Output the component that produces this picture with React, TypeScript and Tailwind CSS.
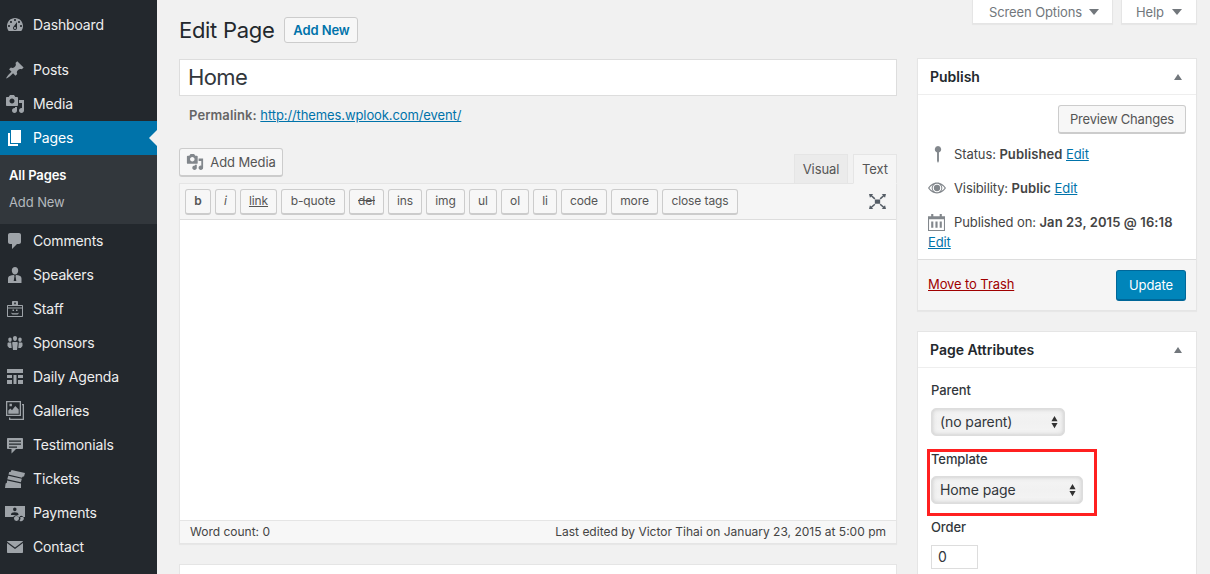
import React from "react";

const D = ({ d, className = "" }: { d: string; className?: string }) => (
  <svg viewBox="0 0 20 20" className={"w-5 h-5 fill-[#9ea3a8] " + className}>
    <path fillRule="evenodd" d={d} />
  </svg>
);

const paths = {
  dashboard: "M3.76 16h12.48c1.1-1.37 1.76-3.11 1.76-5 0-4.42-3.58-8-8-8s-8 3.58-8 8c0 1.89.66 3.63 1.76 5zM10 4c.55 0 1 .45 1 1s-.45 1-1 1-1-.45-1-1 .45-1 1-1zM6 6c.55 0 1 .45 1 1s-.45 1-1 1-1-.45-1-1 .45-1 1-1zm8 0c.55 0 1 .45 1 1s-.45 1-1 1-1-.45-1-1 .45-1 1-1zm-5.37 5.55L12 7v6c0 1.1-.9 2-2 2s-2-.9-2-2c0-.57.24-1.08.63-1.45zM4 10c.55 0 1 .45 1 1s-.45 1-1 1-1-.45-1-1 .45-1 1-1zm12 0c.55 0 1 .45 1 1s-.45 1-1 1-1-.45-1-1 .45-1 1-1zm-5 3c0-.55-.45-1-1-1s-1 .45-1 1 .45 1 1 1 1-.45 1-1z",
  pin: "M10.44 3.02l1.82-1.82 6.36 6.35-1.83 1.82c-1.05-.68-2.48-.57-3.41.36l-.75.75c-.92.93-1.04 2.35-.35 3.41l-1.83 1.82-2.41-2.41-2.8 2.79c-.42.42-3.38 2.71-3.8 2.29s1.86-3.39 2.28-3.81l2.79-2.79L4.1 9.36l1.83-1.82c1.05.69 2.48.57 3.4-.36l.75-.75c.93-.92 1.05-2.35.36-3.41z",
  media: "M13 11V4c0-.55-.45-1-1-1h-1.67L9 1H5L3.67 3H2c-.55 0-1 .45-1 1v7c0 .55.45 1 1 1h10c.55 0 1-.45 1-1zM7 4.5c1.38 0 2.5 1.12 2.5 2.5S8.38 9.5 7 9.5 4.5 8.38 4.5 7 5.62 4.5 7 4.5zM14 6h5v10.5c0 1.38-1.12 2.5-2.5 2.5S14 17.88 14 16.5s1.12-2.5 2.5-2.5c.17 0 .34.02.5.05V9h-3V6zm-4 8.05V13h2v3.5c0 1.38-1.12 2.5-2.5 2.5S7 17.88 7 16.5 8.12 14 9.5 14c.17 0 .34.02.5.05z",
  pages: "M6 15V2h10v13H6zm-1 1h8v2H3V5h2v11z",
  comments: "M5 2h9c1.1 0 2 .9 2 2v7c0 1.100-.9 2-2 2h-2l-5 5v-5H5c-1.100 0-2-.9-2-2V4c0-1.100.9-2 2-2z",
  speakers: "M10 2c1.900 0 3.200 1.500 3.200 3.400S12 9.600 10 9.600 6.800 7.300 6.800 5.400 8.100 2 10 2zM6.800 10.300l2.200-.3.500 1-.8 5h2.600l-.8-5 .5-1 2.200.3c1.900.4 3.300 1.500 3.300 3.200V18H3v-4.500c0-1.700 1.400-2.800 3.800-3.200z",
  staff: "M8 2h4c.5 0 1 .4 1 1v3h4c.6 0 1 .4 1 1v10c0 .6-.4 1-1 1H3c-.6 0-1-.4-1-1V7c0-.6.4-1 1-1h4V3c0-.6.5-1 1-1zm1.200 1.500v1.800h1.600V3.500H9.200zM3 9.500V17h14V9.500H3zM3 7v1.500h14V7H3zm4.500 3.500h1.500V12H7.500v-1.500zm3.500 0h1.500V12H11v-1.500zM6.500 13.500l1 .7h5l1-.7v1.300l-1 .7h-5l-1-.7v-1.300z",
  groups: "M10 3c1.200 0 2 .8 2 2.200S11.200 8 10 8 8 6.600 8 5.200 8.800 3 10 3zM5 4.500c1 0 1.700.7 1.700 1.900S6 8.800 5 8.800s-1.700-1.200-1.700-2.400S4 4.500 5 4.500zm10 0c1 0 1.700.7 1.700 1.900S16 8.800 15 8.800s-1.700-1.200-1.700-2.400.7-1.900 1.700-1.900zM8 9h4c.5 0 .8.4.8.9L12 17H8l-.8-7.100c0-.5.3-.9.800-.9zM3.500 9.500h2.700L6.700 15H4.200l-1.700-2V10.500c0-.5.500-1 1-1zm10.300 0h2.700c.5 0 1 .5 1 1V13l-1.700 2h-2.500l.5-5.500z",
  agenda: "M2 2h16v4H2V2zm0 6h5v3H2V8zm6.500 0h3v9h-3V8zM13 8h5v3h-5V8zM2 13h5v4H2v-4zm11 0h5v4h-5v-4z",
  gallery: "M1 0h15v15H1V0zm1.300 1.300v12.400h12.400V1.300H2.300zM3.300 12.700V9.500l2-2 1.700 1.700L10.300 5l3.400 3.500v4.200H3.300zM4.500 2.800h2.400v2.400H4.500V2.800zM17 3h2v16H4v-2.500h1.300v1.200h12.400V4.300H17V3z",
  testimonials: "M3 3h14c.6 0 1 .4 1 1v9c0 .6-.4 1-1 1h-6l-4.500 4.500V14H3c-.6 0-1-.4-1-1V4c0-.6.4-1 1-1zm1 2.400v1.400h12V5.400H4zm0 3v1.400h12V8.400H4zm0 3v1.400h8v-1.400H4z",
  tickets: "M6.500 1l13.500 3-1 3.500c-.9-.2-1.700.3-2 1.200L3.500 5.500 4.200 3c.9.200 1.700-.2 1.900-1.100L6.500 1zM3.200 6.700l13.600 3-.9 3.600-13.600-3 .9-3.600zM2 11.500l14 3.100V19H0l.6-4.500c.7 0 1.200-.5 1.400-1.200v-1.800z",
  money: "M0 3h20v11h-6.200a3.200 3.200 0 0 0-5.600 0H0V3zm9.800 1.500c-1 0-1.700.8-1.700 1.800s.7 2 1.700 2 1.700-1 1.700-2-.7-1.800-1.700-1.800zM6 11.500c0-1.400 1.600-2.200 3.800-2.200s3.700.8 3.700 2.200v.5H6v-.5zM9 15.500a2.500 2.500 0 1 1 5 0 2.500 2.500 0 0 1-5 0zm5.500-2.200a2.700 2.700 0 1 1 0 4.400 3.300 3.300 0 0 0 0-4.400z",
  email: "M3 4h14c.4 0 .7.1 1 .4L10 10.500 2 4.400c.3-.3.6-.4 1-.4zM2 6l8 6 8-6v9c0 .6-.4 1-1 1H3c-.6 0-1-.4-1-1V6z",
};

const MenuItem = ({ icon, label, active }: { icon: string; label: string; active?: boolean }) => (
  <div className={"relative flex items-center h-[34px] " + (active ? "bg-[#0073aa] text-white" : "text-[#eeeeee]")}>
    <div className="w-[33px] pr-[3px] flex items-center justify-center shrink-0">
      <D d={icon} className={active ? "fill-white" : ""} />
    </div>
    <span>{label}</span>
    {active && (
      <span className="absolute right-0 top-[9px] w-0 h-0 border-y-[8px] border-y-transparent border-r-[8px] border-r-[#f1f1f1]" />
    )}
  </div>
);

const QT = ({ w, children }: { w: string; children: React.ReactNode }) => (
  <div className={"h-[26px] flex items-center justify-center rounded-[3px] border border-[#cccccc] border-b-[2px] bg-[#f7f7f7] text-[#555555] text-[12px] " + w}>
    {children}
  </div>
);

const Arrows = () => (
  <svg viewBox="0 0 8 14" className="w-[7px] h-[14px] fill-[#333333]">
    <path d="M4 0L7.500 6H.5zM4 14L.5 8H7.500z" />
  </svg>
);

const Sel = ({ w, children }: { w: string; children: React.ReactNode }) => (
  <div className={"h-[28px] rounded-[5px] border border-[#dddddd] flex items-center justify-between pl-[8px] pr-[6px] bg-gradient-to-b from-[#f4f4f4] via-[#f1f1f1] to-[#f4f4f4] shadow-[inset_0_0_5px_#c4c4c4] text-[14px] text-[#32373c] " + w}>
    <span>{children}</span>
    <Arrows />
  </div>
);

const BoxHeader = ({ title }: { title: string }) => (
  <div className="h-[36px] flex items-center justify-between pl-[12px] pr-[14px] border-b border-[#eeeeee]">
    <span className="text-[14px] font-semibold text-[#23282d] tracking-normal">{title}</span>
    <span className="w-0 h-0 border-x-[4px] border-x-transparent border-b-[6px] border-b-[#72777c]" />
  </div>
);

const Drop = () => <span className="w-0 h-0 border-x-[5px] border-x-transparent border-t-[6px] border-t-[#72777c]" />;

export default function App() {
  return (
    <div className="relative w-[1210px] h-[574px] overflow-hidden flex bg-[#f1f1f1] text-[13px] leading-[18px] tracking-[-0.1px] text-[#444444] font-['Inter','Noto_Sans',sans-serif]">
      <aside className="w-[157px] shrink-0 bg-[#23282d] text-[14px] pt-[8px] tracking-[-0.15px]">
        <MenuItem icon={paths.dashboard} label="Dashboard" />
        <div className="h-[11px]" />
        <MenuItem icon={paths.pin} label="Posts" />
        <MenuItem icon={paths.media} label="Media" />
        <MenuItem icon={paths.pages} label="Pages" active />
        <div className="h-[69px] bg-[#32373c] pt-[11px] pl-[9px] text-[13px] tracking-[-0.1px]">
          <div className="h-[27px] font-semibold text-white leading-[18px]">All Pages</div>
          <div className="text-[#b4b9be] leading-[18px]">Add New</div>
        </div>
        <MenuItem icon={paths.comments} label="Comments" />
        <MenuItem icon={paths.speakers} label="Speakers" />
        <MenuItem icon={paths.staff} label="Staff" />
        <MenuItem icon={paths.groups} label="Sponsors" />
        <MenuItem icon={paths.agenda} label="Daily Agenda" />
        <MenuItem icon={paths.gallery} label="Galleries" />
        <MenuItem icon={paths.testimonials} label="Testimonials" />
        <MenuItem icon={paths.tickets} label="Tickets" />
        <MenuItem icon={paths.money} label="Payments" />
        <MenuItem icon={paths.email} label="Contact" />
      </aside>

      <main className="flex-1 pl-[22px] pr-[13px]">
        <div className="flex justify-end gap-[8px] h-[24px]">
          <div className="w-[141px] h-[24px] pl-[3px] bg-white border border-[#e5e5e5] border-t-0 shadow-[0_1px_1px_rgba(0,0,0,.04)] flex items-center justify-center gap-[7px] text-[#72777c]">
            Screen Options <Drop />
          </div>
          <div className="w-[76px] h-[24px] bg-white border border-[#e5e5e5] border-t-0 shadow-[0_1px_1px_rgba(0,0,0,.04)] flex items-center justify-center gap-[8px] text-[#72777c]">
            Help <Drop />
          </div>
        </div>

        <div className="flex gap-[20px]">
          <div className="w-[718px] shrink-0">
            <div className="flex items-center gap-[10px] h-[26px] -mt-[7px]">
              <h1 className="text-[22px] tracking-[-0.3px] text-[#23282d] leading-[26px]">Edit Page</h1>
              <div className="h-[26px] w-[74px] flex items-center justify-center rounded-[3px] border border-[#cccccc] bg-[#f7f7f7] text-[#0073aa] font-semibold">
                Add New
              </div>
            </div>
            <div className="mt-[16px] h-[37px] bg-white border border-[#dddddd] flex items-center pl-[8px] pb-[2px] text-[22px] tracking-[-0.6px] text-[#32373c]">
              Home
            </div>
            <div className="mt-[10px] pl-[10px] h-[18px] text-[#666666]">
              <b className="font-semibold tracking-[0.1px]">Permalink:</b>{" "}
              <span className="text-[#0073aa] underline">http://themes.wplook.com/event/</span>
            </div>
            <div className="mt-[24px] flex items-end justify-between h-[35px]">
              <div className="mb-[6px] h-[29px] w-[104px] flex items-center justify-center gap-[6px] rounded-[3px] border border-[#cccccc] border-b-[2px] bg-[#f7f7f7] text-[#555555]">
                <D d={paths.media} className="w-[18px] h-[18px] fill-[#82878c]" />
                Add Media
              </div>
              <div className="flex gap-[5px] h-[30px] relative -mb-px">
                <div className="w-[54px] bg-[#ebebeb] border border-[#e5e5e5] flex items-center justify-center text-[#555555]">Visual</div>
                <div className="w-[44px] bg-[#f5f5f5] border border-[#e5e5e5] border-b-[#f5f5f5] flex items-center justify-center text-[#555555]">Text</div>
              </div>
            </div>
            <div className="border border-[#e5e5e5] bg-white shadow-[0_1px_1px_rgba(0,0,0,.04)]">
              <div className="h-[36px] bg-[#f5f5f5] border-b border-[#dddddd] flex items-center pl-[5px] pr-[10px] gap-[4px]">
                <QT w="w-[26px]"><b className="font-semibold">b</b></QT>
                <QT w="w-[21px]"><i>i</i></QT>
                <QT w="w-[37px]"><span className="underline">link</span></QT>
                <QT w="w-[64px]">b-quote</QT>
                <QT w="w-[35px]"><span className="line-through">del</span></QT>
                <QT w="w-[34px]">ins</QT>
                <QT w="w-[39px]">img</QT>
                <QT w="w-[28px]">ul</QT>
                <QT w="w-[28px]">ol</QT>
                <QT w="w-[24px]">li</QT>
                <QT w="w-[46px]">code</QT>
                <QT w="w-[47px]">more</QT>
                <QT w="w-[76px]">close tags</QT>
                <svg viewBox="0 0 16 14" className="ml-auto w-[17px] h-[15px] fill-[#555d66]">
                  <path d="M0 0h4l-1.200 1.200 3.200 2.800L5 5 2 2.200.9 3.400 0 0zM16 0h-4l1.200 1.200-3.200 2.800 1 1 3-2.800 1.100 1.200L16 0zM0 14h4l-1.200-1.200 3.200-2.800-1-1-3 2.800-1.100-1.200L0 14zM16 14h-4l1.200-1.200-3.200-2.800 1-1 3 2.800 1.100-1.200L16 14zM5.500 5h5v4h-5z" />
                </svg>
              </div>
              <div className="h-[300px] bg-white" />
              <div className="h-[23px] bg-[#f7f7f7] border-t border-[#e5e5e5] flex items-center justify-between px-[10px] text-[12px] text-[#444444] tracking-normal">
                <span>Word count: 0</span>
                <span>Last edited by Victor Tihai on January 23, 2015 at 5:00 pm</span>
              </div>
            </div>
            <div className="mt-[20px] h-[20px] bg-white border border-[#e5e5e5]" />
          </div>

          <div className="w-[280px] shrink-0 pt-[34px]">
            <section className="bg-white border border-[#e5e5e5] shadow-[0_1px_1px_rgba(0,0,0,.04)]">
              <BoxHeader title="Publish" />
              <div className="h-[164px] pt-[10px] px-[10px]">
                <div className="flex justify-end">
                  <div className="h-[29px] w-[128px] flex items-center justify-center rounded-[3px] border border-[#cccccc] border-b-[2px] bg-[#f7f7f7] text-[#555555] tracking-[-0.2px]">
                    Preview Changes
                  </div>
                </div>
                <div className="mt-[11px] flex items-center h-[18px]">
                  <svg viewBox="0 0 10 18" className="w-[20px] h-[17px] fill-[#82878c] mr-[6px]">
                    <path d="M5 0a3.500 3.500 0 0 1 1 6.800V16l-1 2-1-2V6.800A3.500 3.500 0 0 1 5 0z" />
                  </svg>
                  <span>Status: <b className="font-semibold tracking-[0.1px]">Published</b> <span className="text-[#0073aa] underline">Edit</span></span>
                </div>
                <div className="mt-[16px] flex items-center h-[18px]">
                  <svg viewBox="0 0 20 12" className="w-[18px] h-[12px] mr-[8px] fill-[#82878c]">
                    <path fillRule="evenodd" d="M10 0c4.500 0 8 3 10 6-2 3-5.500 6-10 6S2 9 0 6c2-3 5.500-6 10-6zm0 1.200a4.800 4.800 0 1 0 0 9.600 4.800 4.800 0 0 0 0-9.600zM10 2.500a3.500 3.500 0 1 1 0 7 3.500 3.500 0 0 1 0-7zM1.500 6c1 1.300 2.200 2.500 3.800 3.300a5.500 5.500 0 0 1 0-6.600C3.700 3.500 2.500 4.700 1.500 6zm17 0c-1-1.300-2.200-2.500-3.800-3.300a5.500 5.500 0 0 1 0 6.600c1.600-.8 2.800-2 3.800-3.300z" />
                  </svg>
                  <span>Visibility: <b className="font-semibold tracking-[0.1px]">Public</b> <span className="text-[#0073aa] underline">Edit</span></span>
                </div>
                <div className="mt-[16px] flex items-center h-[18px]">
                  <svg viewBox="0 0 16 16" className="w-[17px] h-[17px] mr-[9px] fill-[#82878c]">
                    <path fillRule="evenodd" d="M3 0h2v2h6V0h2v2h3v14H0V2h3V0zM1 5v10h14V5H1zm2 2h2v6H3V7zm4 0h2v6H7V7zm4 0h2v6h-2V7z" />
                  </svg>
                  <span>Published on: <b className="font-semibold tracking-[0.1px]">Jan 23, 2015 @ 16:18</b></span>
                </div>
                <div className="mt-[2px] text-[#0073aa] underline">Edit</div>
              </div>
              <div className="h-[51px] bg-[#f5f5f5] border-t border-[#dddddd] flex items-start justify-between px-[10px] pt-[10px]">
                <span className="text-[#a00000] underline mt-[5px]">Move to Trash</span>
                <div className="h-[31px] w-[70px] rounded-[3px] bg-[#0085ba] border border-[#006799] border-b-[2px] text-white text-[13px] flex items-center justify-center">
                  Update
                </div>
              </div>
            </section>

            <section className="mt-[20px] h-[260px] bg-white border border-[#e5e5e5]">
              <BoxHeader title="Page Attributes" />
              <div className="pl-[13px] pt-[13px] relative">
                <div className="font-medium leading-[18px] text-[#32373c]">Parent</div>
                <div className="mt-[9px]"><Sel w="w-[134px]">(no parent)</Sel></div>
                <div className="mt-[14px] font-medium leading-[18px] text-[#32373c]">Template</div>
                <div className="mt-[8px]"><Sel w="w-[152px]">Home page</Sel></div>
                <div className="mt-[14px] font-medium leading-[18px] text-[#32373c]">Order</div>
                <div className="mt-[9px] w-[47px] h-[24px] border border-[#dddddd] flex items-center pl-[6px] text-[14px] text-[#32373c]">0</div>
                <div className="absolute left-[9px] top-[81px] w-[170px] h-[67px] border-[3px] border-[#ff2020] pointer-events-none" />
              </div>
            </section>
          </div>
        </div>
      </main>
    </div>
  );
}
